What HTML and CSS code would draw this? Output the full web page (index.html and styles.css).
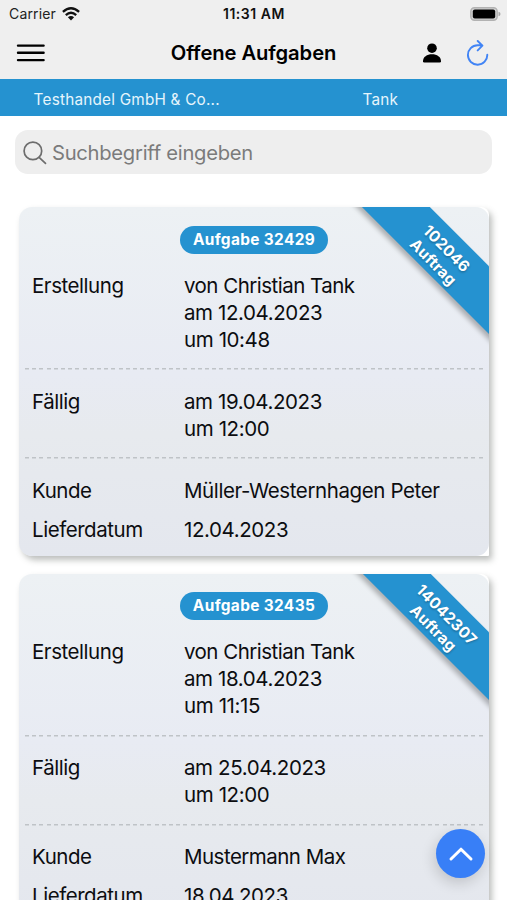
FILE: index.html
```html
<!DOCTYPE html>
<html lang="de">
<head>
<meta charset="utf-8">
<meta name="viewport" content="width=device-width, initial-scale=1">
<title>Offene Aufgaben</title>
<link rel="stylesheet" href="styles.css">
</head>
<body>
<div class="screen">
  <header class="top">
    <div class="status">
      <div class="carrier"><span>Carrier</span>
        <svg width="18" height="14" viewBox="0 0 18 14" fill="none" stroke="#111" stroke-width="2.3"><path d="M.9 4.9Q9-2.4 17.1 4.9"/><path d="M3.8 8.1Q9 3.3 14.2 8.1"/><path d="M9 13.4L5.9 10.2Q9 7.8 12.1 10.2Z" fill="#111" stroke="none"/></svg>
      </div>
      <span class="clock">11:31 AM</span>
      <svg class="battery" width="31" height="14" viewBox="0 0 31 14"><rect x=".8" y=".8" width="26.4" height="12.4" rx="3.6" fill="#d2d2d2" stroke="#b2b2b2" stroke-width="1.4"/><rect x="2.8" y="2.5" width="22.4" height="9" rx="2" fill="#000"/><path d="M28.5 4.7Q30.5 5.3 30.5 7T28.5 9.3Z" fill="#a9a9a9"/></svg>
    </div>
    <div class="nav">
      <svg class="menu" width="30" height="20" viewBox="0 0 30 20" stroke="#000" stroke-width="2.4" stroke-linecap="round"><path d="M2 2.6H27.6M2 9.8H27.6M2 17.1H27.6"/></svg>
      <h1>Offene Aufgaben</h1>
      <div class="actions">
        <svg width="20" height="20" viewBox="0 0 20 20"><circle cx="10" cy="5.2" r="4.8"/><path d="M1 18.2C1 14 5 11.3 10 11.3S19 14 19 18.2Q19 19.6 17.7 19.6H2.3Q1 19.6 1 18.2Z"/></svg>
        <svg width="24" height="26" viewBox="0 0 24 26" fill="none" stroke="#4184f5" stroke-width="1.9" stroke-linecap="round" stroke-linejoin="round"><path d="M21.3 14.7A9.7 9.7 0 1 1 11.6 5.3H16.2M11.7 1L16.4 5.7L11.7 10.4"/></svg>
      </div>
    </div>
  </header>
  <div class="bar"><span>Testhandel GmbH &amp; Co...</span><span>Tank</span></div>
  <div class="search">
    <svg width="24" height="24" viewBox="0 0 24 24" fill="none" stroke="#6d6d6d" stroke-width="1.7" stroke-linecap="round"><circle cx="9.9" cy="9.9" r="8.8"/><path d="M16.1 16.4L22.5 22.4"/></svg>
    <span>Suchbegriff eingeben</span>
  </div>
  <main class="list">
    <div class="shell"><article class="card">
      <div class="ribbon"><span>102046</span><span>Auftrag</span></div>
      <div class="pill">Aufgabe 32429</div>
      <dl class="row created"><dt>Erstellung</dt><dd><span class="name">von Christian Tank</span><br>am 12.04.2023<br>um 10:48</dd></dl>
      <dl class="row due"><dt>Fällig</dt><dd>am 19.04.2023<br>um 12:00</dd></dl>
      <dl class="row customer"><dt>Kunde</dt><dd>Müller-Westernhagen Peter</dd><dt>Lieferdatum</dt><dd>12.04.2023</dd></dl>
    </article></div>
    <div class="shell"><article class="card">
      <div class="ribbon"><span>14042307</span><span>Auftrag</span></div>
      <div class="pill">Aufgabe 32435</div>
      <dl class="row created"><dt>Erstellung</dt><dd><span class="name">von Christian Tank</span><br>am 18.04.2023<br>um 11:15</dd></dl>
      <dl class="row due"><dt>Fällig</dt><dd>am 25.04.2023<br>um 12:00</dd></dl>
      <dl class="row customer"><dt>Kunde</dt><dd><span class="name">Mustermann Max</span></dd><dt>Lieferdatum</dt><dd>18.04.2023</dd></dl>
    </article></div>
  </main>
  <button class="up" aria-label="Nach oben"><svg width="26" height="16" viewBox="0 0 26 16" fill="none" stroke="#fff" stroke-width="3" stroke-linecap="round" stroke-linejoin="round"><path d="M3 13L13 3.2L23 13"/></svg></button>
</div>
</body>
</html>
```
FILE: styles.css
```css
* { box-sizing: border-box; }
body { margin: 0; background: #fff; color: #0c0d10; font-family: Inter, "Liberation Sans", sans-serif; }
.screen { position: relative; width: 507px; height: 900px; overflow: hidden; }
.top { height: 79px; background: #efefef; }
.status { display: grid; grid-template-columns: 1fr auto 1fr; align-items: center; height: 27px; padding: 0 6px 0 9px; font-size: 14px; line-height: 27px; }
.carrier { display: flex; align-items: center; gap: 6px; color: #222; letter-spacing: .15px; }
.clock { margin-right: 2px; font-weight: 600; font-size: 14px; letter-spacing: .55px; color: #111; }
.battery { justify-self: end; }
.nav { display: grid; grid-template-columns: 1fr auto 1fr; align-items: center; height: 53px; padding: 0 17px 1px 17px; }
.menu { margin-left: -1px; }
h1 { margin: 0; font-size: 20.2px; font-weight: 600; line-height: 26px; letter-spacing: -.08px; color: #000; }
.actions { display: flex; align-items: center; justify-content: flex-end; gap: 24px; }
.bar { display: grid; grid-template-columns: 1fr 1fr; height: 36.5px; background: #2592d0; color: #e6f5fc; font-size: 15.3px; line-height: 41px; letter-spacing: .22px; text-align: center; }
.search { display: flex; align-items: center; gap: 5px; height: 44px; margin: 14.5px 15px 0; padding: 1px 0 0 8px; border-radius: 13px; background: #eee; color: #7b7b7b; font-size: 20.2px; letter-spacing: -.27px; }
.list { display: flex; flex-direction: column; gap: 17.5px; padding: 33px 18px 0 19px; }
.shell { border-radius: 14px 8px 1px 14px; background: #fff; box-shadow: 3px 4px 6px rgba(80, 84, 80, .38); }
.card { position: relative; height: 349px; padding: 18.5px 6px 0; border-radius: 13px; overflow: hidden; background: linear-gradient(#edf1f4, #e8ebf3 48%, #e7eaee 65%, #e4e7ee); }
.pill { width: 148px; height: 28px; margin: 0 auto; border-radius: 14px; background: #2592d0; color: #fff; text-align: center; font-size: 15.4px; font-weight: 700; line-height: 28px; letter-spacing: .36px; }
.row { display: grid; grid-template-columns: 152px 1fr; row-gap: 12px; margin: 0; padding: 18.2px 7px 15.8px; font-size: 20.5px; line-height: 27px; letter-spacing: -.4px; }
.row dd, .row dt { margin: 0; white-space: nowrap; }
.row dt { letter-spacing: -.45px; }
.name { letter-spacing: -.52px; }
.row + .row { padding-top: 19.5px; background: repeating-linear-gradient(90deg, #bfc3c7 0 4px, transparent 4px 7.2px) top / 100% 1.5px no-repeat; }
.row.due { padding-bottom: 15.5px; }
.ribbon { position: absolute; left: 313.5px; top: 22.5px; width: 220px; height: 47.5px; padding: 7.5px 2px 0 0; transform: rotate(45deg); background: #2592d0; box-shadow: 2px 4px 5px rgba(0, 0, 0, .28); color: #fff; text-align: center; font-size: 15.4px; font-weight: 700; line-height: 19.5px; letter-spacing: .2px; text-shadow: 1px 1px 2px rgba(0, 0, 0, .25); }
.ribbon span { display: block; }
.up { position: absolute; left: 436px; top: 829px; display: grid; place-items: center; width: 49px; height: 49px; padding: 0; border: 0; border-radius: 50%; background: #387ff7; box-shadow: -2px 5px 14px rgba(0, 0, 0, .16); }
```
